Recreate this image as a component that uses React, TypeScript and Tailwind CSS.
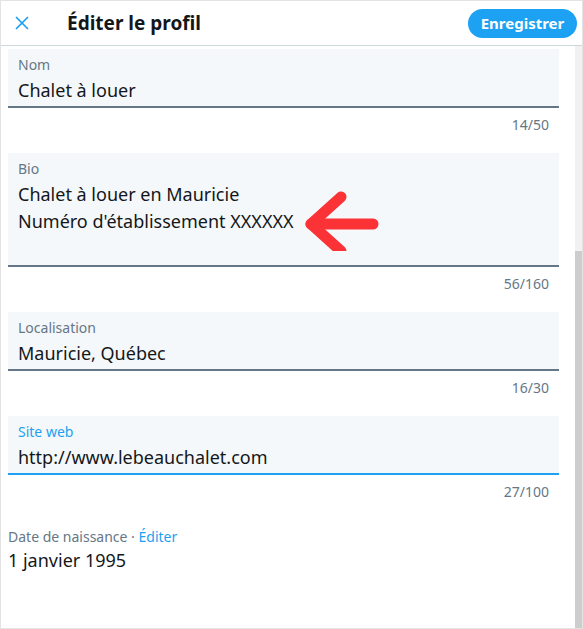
import { X } from "lucide-react";

type FieldProps = {
  label: string;
  lines: string[];
  counter: string;
  active?: boolean;
  tall?: boolean;
};

function Field({ label, lines, counter, active, tall }: FieldProps) {
  return (
    <div className="mb-[19px]">
      <div
        className={`bg-[#f5f8fa] px-[10px] pt-[7px] pb-[2px] border-b-2 ${
          active ? "border-[#1da1f2]" : "border-[#657786]"
        }`}
      >
        <div
          className={`text-[14px] leading-[18px] ${
            active ? "text-[#1da1f2]" : "text-[#657786]"
          }`}
        >
          {label}
        </div>
        <div
          className={`text-[#14171a] text-[18px] ${
            tall ? "mt-[3px] leading-[27px] pb-[28px]" : "mt-[2px] leading-[28px]"
          }`}
        >
          {lines.map((l) => (
            <div key={l}>{l}</div>
          ))}
        </div>
      </div>
      <div className="pt-[8px] pr-[10px] text-right text-[14px] leading-[18px] text-[#657786]">
        {counter}
      </div>
    </div>
  );
}

export default function App() {
  return (
    <div
      className="w-[583px] h-[629px] bg-white border border-[#e3e3e3] flex flex-col overflow-hidden"
      style={{ fontFamily: '"Noto Sans", "Open Sans", sans-serif' }}
    >
      {/* header */}
      <div className="h-[45px] shrink-0 flex items-center border-b border-[#ccd6dd] pl-[10px] pr-[5px]">
        <X className="w-[22px] h-[22px] text-[#1da1f2]" strokeWidth={1.9} />
        <h1 className="ml-[34px] text-[19px] font-bold text-[#14171a] flex-1">Éditer le profil</h1>
        <button className="h-[29px] w-[109px] rounded-full bg-[#1da1f2] text-white text-[15px] font-bold">
          Enregistrer
        </button>
      </div>

      <div className="flex flex-1 min-h-0">
        {/* content */}
        <div className="flex-1 pl-[7px] pr-[16px] pt-[3px]">
          <Field label="Nom" lines={["Chalet à louer"]} counter="14/50" />
          <div className="relative">
            <Field
              label="Bio"
              lines={["Chalet à louer en Mauricie", "Numéro d'établissement XXXXXX"]}
              counter="56/160"
              tall
            />
            {/* red annotation arrow */}
            <svg
              className="absolute left-[291px] top-[38px]"
              width="80"
              height="60"
              viewBox="0 0 80 60"
            >
              <g stroke="#fb3236" strokeWidth="11" strokeLinecap="round" strokeLinejoin="round" fill="none">
                <path d="M42 6 L12 33 L42 60" />
                <path d="M12 33 L74 33" />
              </g>
            </svg>
          </div>
          <Field label="Localisation" lines={["Mauricie, Québec"]} counter="16/30" />
          <Field label="Site web" lines={["http://www.lebeauchalet.com"]} counter="27/100" active />

          <div className="mt-[27px] text-[14px] leading-[18px] text-[#657786]">
            Date de naissance · <span className="text-[#1da1f2]">Éditer</span>
          </div>
          <div className="mt-[2px] text-[18px] leading-[24px] text-[#14171a]">1 janvier 1995</div>
        </div>

        {/* scrollbar */}
        <div className="w-[7px] bg-[#f1f1f1] flex flex-col">
          <div className="h-[205px]" />
          <div className="flex-1 bg-[#cdcdcd]" />
        </div>
      </div>
    </div>
  );
}
